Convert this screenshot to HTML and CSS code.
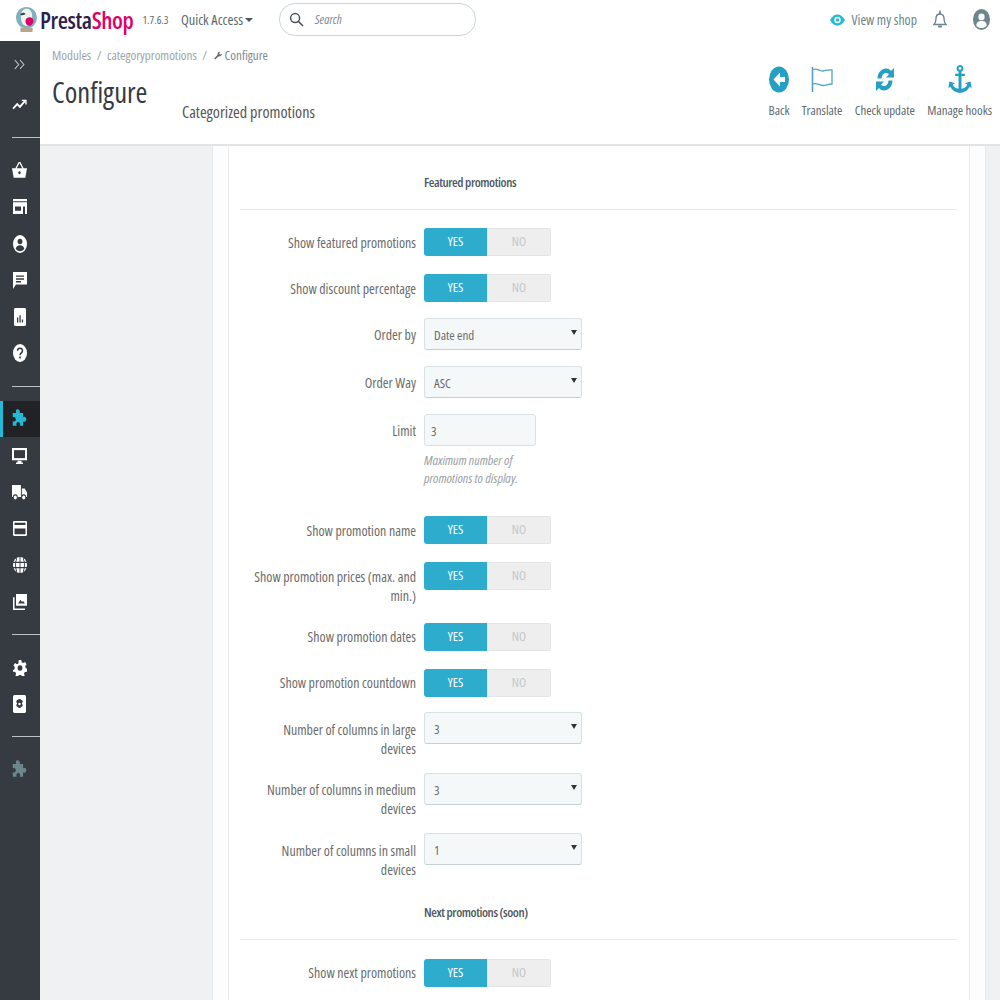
FILE: index.html
```html
<!DOCTYPE html>
<html lang="en">
<head>
<meta charset="utf-8">
<title>Configure</title>
<link rel="stylesheet" href="styles.css">
</head>
<body>
<svg class="defs" width="0" height="0" aria-hidden="true">
  <symbol id="puzzle" viewBox="1.5 .8 13.5 14" preserveAspectRatio="none"><path d="M5.600 1.200c1.300-.8 3 .1 3 1.500 0 .5-.2.8-.3 1.100h3.200v3.300c.4-.3.8-.5 1.200-.5 1.400 0 2.200 1.700 1.300 2.900-.6.8-1.700.9-2.500.3v3.400H8.400c.3-.4.5-.8.4-1.300-.1-1.500-2-2.100-3-1-.5.600-.5 1.500 0 2.300H2.200v-3.600c.5.400 1.200.6 1.800.3 1.300-.6 1.200-2.600-.2-3.100-.6-.2-1.200 0-1.600.3V3.800h3.200c-.5-.8-.7-2 .2-2.600z"/></symbol>
</svg>
<header class="topbar">
  <div class="brand">
    <svg class="logo" viewBox="0 0 24 30" width="21" height="27" preserveAspectRatio="none"><circle cx="12" cy="13" r="12" fill="#7fb0be"/><path d="M5.500 11c0-5 3-8 6.500-8s6.500 3 6.500 8c0 6-1.500 11-6.500 11-3.500 0-6.500-3-6.500-11z" fill="#f3f1ec"/><path d="M11 9C9 6.500 5.500 7.500 5 10c2 .5 4.500.3 6-1z" fill="#3a3f4a"/><path d="M12 14c3-2.500 7-1.500 8 2 0 4-3.500 7-7 5.500-2.500-2-3-5.500-1-7.500z" fill="#df0067"/><rect x="5" y="24" width="14" height="5" rx="1" fill="#b9a68f"/></svg>
    <span class="brand-name"><span class="brand-dark">Presta</span><span class="brand-pink">Shop</span></span>
    <span class="version">1.7.6.3</span>
  </div>
  <div class="quick">Quick Access<span class="caret"></span></div>
  <div class="search">
    <svg viewBox="0 0 16 16" width="15" height="15" fill="none" stroke="#4a5560" stroke-width="1.600"><circle cx="6.500" cy="6.500" r="4.800"/><path d="M10 10l5 5"/></svg>
    <span>Search</span>
  </div>
  <div class="top-right">
    <div class="view-shop">
      <svg viewBox="0 0 16 12" width="15" height="12"><path d="M0 6c2-4 5-6 8-6s6 2 8 6c-2 4-5 6-8 6S2 10 0 6z" fill="#25b9d7"/><circle cx="8" cy="6" r="3.400" fill="#fff"/><circle cx="8" cy="6" r="1.900" fill="#25b9d7"/></svg>
      <span>View my shop</span>
    </div>
    <svg class="bell" viewBox="0 0 14 18" width="14" height="19" fill="none" stroke="#6c868e" stroke-width="1.400"><path d="M1 14h12c-1.500-1.500-2-2.500-2-6 0-2.500-1.500-4.500-4-4.500S3 5.500 3 8c0 3.500-.5 4.500-2 6z"/><path d="M7 1v2.500M5.800 16h2.400" stroke-width="1.800" stroke-linecap="round"/></svg>
    <svg class="user" viewBox="0 0 18 20" width="17" height="21" preserveAspectRatio="none"><ellipse cx="9" cy="10" rx="9" ry="10" fill="#6c868e"/><circle cx="9" cy="7.500" r="3.300" fill="#fff"/><path d="M3.500 16c0-3.500 2.500-4.500 5.500-4.500s5.500 1 5.500 4.500c-1.500 1.500-3.500 2.200-5.500 2.200S5 17.500 3.500 16z" fill="#fff"/></svg>
  </div>
</header>

<div class="shell">
  <nav class="side">
    <div class="nav-item">
      <svg viewBox="0 0 14 12" width="12" height="11" fill="none" stroke="#bebebe" stroke-width="1.300"><path d="M1 1l4.500 5L1 11M7 1l4.500 5L7 11"/></svg>
    </div>
    <div class="nav-item nav-trend">
      <svg viewBox="0 0 16 12" width="15" height="11" fill="none" stroke="#fff" stroke-width="2"><path d="M1 10.500l4.500-5 3 3L14 2"/><path d="M10.500 1.500H15V6" stroke-width="1.500"/></svg>
    </div>
    <hr class="nav-sep">
    <div class="nav-group">
      <div class="nav-item"><svg viewBox="0 0 16 14" width="15" height="16" preserveAspectRatio="none" fill="#fff"><path d="M0 5.500h16l-1.800 8.200H1.800z"/><path d="M4 6l3.500-5.500h1L12 6" fill="none" stroke="#fff" stroke-width="1.300"/><circle cx="8" cy="9.500" r="1.300" fill="#363a41"/></svg></div>
      <div class="nav-item"><svg viewBox="0 0 14 14" width="14" height="15" preserveAspectRatio="none" fill="#fff"><path d="M0 0h14v2H0zM0 3h14v11H0z"/><path d="M2 7h6v4H2zM10 7h2v7h-2z" fill="#363a41"/></svg></div>
      <div class="nav-item"><svg viewBox="0 0 14 16" width="14" height="18" preserveAspectRatio="none"><ellipse cx="7" cy="8" rx="7" ry="8" fill="#fff"/><circle cx="7" cy="5.800" r="2.400" fill="#363a41"/><path d="M2.800 12.500c0-2.500 2-3.500 4.200-3.500s4.200 1 4.200 3.500C10 14 8.500 14.400 7 14.400S4 14 2.800 12.500z" fill="#363a41"/></svg></div>
      <div class="nav-item"><svg viewBox="0 0 14 15" width="14" height="17" preserveAspectRatio="none"><path d="M0 0h14v11H3l-3 4z" fill="#fff"/><path d="M3 3h8v1.300H3zM3 5.500h8v1.300H3zM3 8h5v1.300H3z" fill="#363a41"/></svg></div>
      <div class="nav-item"><svg viewBox="0 0 12 15" width="12" height="18" preserveAspectRatio="none"><rect width="12" height="15" rx="1.200" fill="#fff"/><path d="M3 8h1.300v4H3zM5.400 6h1.300v6H5.400zM7.800 9.500h1.300V12H7.800z" fill="#363a41"/></svg></div>
      <div class="nav-item"><svg viewBox="0 0 14 16" width="14" height="18" preserveAspectRatio="none"><ellipse cx="7" cy="8" rx="7" ry="8" fill="#fff"/><path d="M4.500 6c0-3 5-3 5 0 0 2-2.500 2-2.500 4" fill="none" stroke="#363a41" stroke-width="1.500"/><path d="M6.200 11.200h1.600v1.700H6.200z" fill="#363a41"/></svg></div>
    </div>
    <hr class="nav-sep">
    <div class="nav-group">
      <div class="nav-item active"><svg width="15" height="19" fill="#25b9d7"><use href="#puzzle"/></svg></div>
      <div class="nav-item"><svg viewBox="0 0 15 15" width="15" height="16" preserveAspectRatio="none"><path d="M0 0h15v11.500H0z" fill="#fff"/><path d="M2 2h11v7.500H2z" fill="#363a41"/><path d="M5.500 12h4v1.500h1.500V15H4v-1.500h1.500z" fill="#fff"/></svg></div>
      <div class="nav-item"><svg viewBox="0 0 16 13" width="15" height="15" preserveAspectRatio="none" fill="#fff"><path d="M0 0h9.500v10.500H0zM10.500 3h3L16 6.500v4h-5.500z"/><circle cx="3.500" cy="10.800" r="2.200" stroke="#363a41"/><circle cx="12.500" cy="10.800" r="2.200" stroke="#363a41"/></svg></div>
      <div class="nav-item"><svg viewBox="0 0 14 13" width="14" height="15" preserveAspectRatio="none"><rect width="14" height="13" rx="1" fill="#fff"/><path d="M1.500 1.500h11v2h-11zM1.500 6.500h11v5h-11z" fill="#363a41"/></svg></div>
      <div class="nav-item"><svg viewBox="0 0 14 14" width="14" height="16" preserveAspectRatio="none"><circle cx="7" cy="7" r="7" fill="#fff"/><path d="M0 4.700h14M0 9.300h14M7 0v14M3.800 1c-1.500 3.500-1.500 8.500 0 12M10.200 1c1.500 3.500 1.500 8.500 0 12" fill="none" stroke="#363a41" stroke-width=".9"/></svg></div>
      <div class="nav-item"><svg viewBox="0 0 14 15" width="14" height="16" preserveAspectRatio="none"><path d="M3 0h11v11H3z" fill="#fff"/><path d="M0 3h1.500v10.500H12V15H0z" fill="#fff"/><path d="M5 9l2.500-3.500 1.500 2 1-1 2 2.500z" fill="#363a41"/></svg></div>
    </div>
    <hr class="nav-sep">
    <div class="nav-group">
      <div class="nav-item"><svg viewBox="0 0 14 14" width="14" height="16" preserveAspectRatio="none"><path d="M5.700 0h2.600l.4 2 1.500.7 1.800-1 1.600 2-1.300 1.600.3 1.700 1.800.8-.5 2.500-2 .1-.9 1.400.7 1.900-2.300 1.100-1.300-1.600H6l-1.300 1.600-2.300-1.100.7-1.900-.9-1.400-2-.1L-.3 8.800l1.800-.8.300-1.700L.5 4.700l1.600-2 1.800 1 1.500-.7z" fill="#fff"/><circle cx="7" cy="7" r="2.400" fill="#363a41"/></svg></div>
      <div class="nav-item"><svg viewBox="0 0 13 16" width="13" height="18" preserveAspectRatio="none"><rect width="13" height="16" rx="1.500" fill="#fff"/><path d="M5.400 3.500h2.200l.2 1.200 1-.4 1.100 1.800-.9.900v1l.9.900-1.100 1.800-1-.4-.2 1.200H5.400l-.2-1.200-1 .4-1.100-1.800.9-.9v-1l-.9-.9 1.100-1.800 1 .4z" fill="#363a41"/><circle cx="6.500" cy="8" r="1.200" fill="#fff"/></svg></div>
    </div>
    <hr class="nav-sep">
    <div class="nav-item nav-last"><svg width="15" height="19" fill="#6c868e"><use href="#puzzle"/></svg></div>
  </nav>

  <main class="main">
    <section class="page-head">
      <div class="head-left">
        <div class="crumbs">
          <span>Modules</span><span>/</span><span>categorypromotions</span><span>/</span>
          <span class="crumb-last"><svg viewBox="0 0 10 10" width="8" height="9" fill="#6c6c6c"><path d="M0 9l4.500-5C4 2 5.500 0 8 .5L6.500 2 7 3.500l1.500.3L10 2.500C10 5 8 6.500 6 6L1.500 10z"/></svg>Configure</span>
        </div>
        <div class="title-row">
          <h1>Configure</h1>
          <h2>Categorized promotions</h2>
        </div>
      </div>
      <div class="toolbar">
        <div class="tool"><svg viewBox="0 0 20 29" width="20" height="29"><ellipse cx="10" cy="14.500" rx="10" ry="13" fill="#25a0c4"/><path d="M11 7.500l-6.500 7 6.500 7v-4.500h5v-5h-5z" fill="#fff"/></svg><span>Back</span></div>
        <div class="tool"><svg viewBox="0 0 22 29" width="22" height="29" fill="none" stroke="#4fa3c0" stroke-width="1.300"><path d="M1.500 2v25" stroke-width="1.600"/><path d="M2 4.500c4-2 6 2 10 1.500 3-.3 5-1.500 9-1v14c-4 0-6 1.500-9 1.500-4 0-6-3-10-1.500"/></svg><span>Translate</span></div>
        <div class="tool"><svg viewBox="0 0 20 29" width="20" height="29" fill="#25a0c4"><path d="M2.500 13.500C2.500 7.500 7 3 11.500 3.500c2 .2 3.500 1.200 4.500 2.500L19 3v9.500h-8l3-3.200c-2.500-2.500-7-1.500-7.500 4.200z"/><path d="M17.500 15.500c0 6-4.500 10.500-9 10-2-.2-3.500-1.200-4.500-2.500L1 26v-9.500h8l-3 3.200c2.500 2.500 7 1.500 7.500-4.200z"/></svg><span>Check update</span></div>
        <div class="tool"><svg viewBox="0 0 24 30" width="24" height="29" fill="#25a0c4"><path d="M12 0a3.500 3.500 0 0 1 1.500 6.700V9H17v2.500h-3.500v13c3-.3 5.500-2 6-4.500L17 19l6-2 1 7-2-1.500c-1.500 3.500-5 6-10 6.500-5-.5-8.500-3-10-6.500L0 24l1-7 6 2-2.500 1c.5 2.500 3 4.200 6 4.500v-13H7V9h3.500V6.700A3.500 3.500 0 0 1 12 0zm0 2a1.500 1.500 0 1 0 0 3 1.500 1.500 0 0 0 0-3z"/></svg><span>Manage hooks</span></div>
      </div>
    </section>

    <div class="content">
      <div class="panel">
        <form class="card">
          <h3 class="legend"><span>Featured promotions</span></h3>

          <div class="row"><label>Show featured promotions</label><div class="toggle"><span class="yes">YES</span><span class="no">NO</span></div></div>
          <div class="row"><label>Show discount percentage</label><div class="toggle"><span class="yes">YES</span><span class="no">NO</span></div></div>
          <div class="row row-select"><label>Order by</label><div class="select"><span>Date end</span><i></i></div></div>
          <div class="row row-select row-second"><label>Order Way</label><div class="select"><span>ASC</span><i></i></div></div>
          <div class="row row-help row-select row-second">
            <label>Limit</label>
            <div class="field"><div class="input">3</div><p class="help">Maximum number of promotions to display.</p></div>
          </div>
          <div class="row"><label>Show promotion name</label><div class="toggle"><span class="yes">YES</span><span class="no">NO</span></div></div>
          <div class="row"><label>Show promotion prices (max. and min.)</label><div class="toggle"><span class="yes">YES</span><span class="no">NO</span></div></div>
          <div class="row"><label>Show promotion dates</label><div class="toggle"><span class="yes">YES</span><span class="no">NO</span></div></div>
          <div class="row"><label>Show promotion countdown</label><div class="toggle"><span class="yes">YES</span><span class="no">NO</span></div></div>
          <div class="row row-select row-tall"><label>Number of columns in large devices</label><div class="select"><span>3</span><i></i></div></div>
          <div class="row row-select row-tall row-second"><label>Number of columns in medium devices</label><div class="select"><span>3</span><i></i></div></div>
          <div class="row row-select row-tall row-second"><label>Number of columns in small devices</label><div class="select"><span>1</span><i></i></div></div>

          <h3 class="legend legend-next"><span>Next promotions (soon)</span></h3>
          <div class="row"><label>Show next promotions</label><div class="toggle"><span class="yes">YES</span><span class="no">NO</span></div></div>
        </form>
      </div>
    </div>
  </main>
</div>
</body>
</html>
```

FILE: styles.css
```css
* { box-sizing: border-box; }
html, body { margin: 0; height: 1000px; overflow: hidden; }
body { font-family: "Open Sans", "Liberation Sans", sans-serif; font-stretch: 75%; font-size: 13px; color: #6c6c6c; background: #fff; }
.defs { position: absolute; }

.topbar { height: 41px; display: flex; align-items: center; background: #fff; padding: 0 0 2px 16px; }
.brand { display: flex; align-items: center; width: 165px; }
.logo { flex: none; margin-right: 3px; }
.brand-name { font-stretch: 87%; font-size: 23.500px; font-weight: 600; letter-spacing: -0.4px; white-space: nowrap; }
.brand-dark { color: #2d1f4e; }
.brand-pink { color: #df0067; }
.version { font-size: 11px; margin-left: 9px; color: #5c6a70; }
.quick { width: 98px; color: #5d6a70; font-size: 14.300px; display: flex; align-items: center; white-space: nowrap; }
.caret { width: 0; height: 0; border: 4px solid transparent; border-top-color: #4a5560; border-bottom: 0; margin-left: 2px; }
.search { width: 197px; height: 33px; border: 1px solid #c7d6da; border-radius: 16px; display: flex; align-items: center; padding-left: 9px; gap: 11px; font-style: italic; color: #7a8a90; font-size: 12.400px; }
.top-right { margin-left: auto; display: flex; align-items: center; }
.view-shop { display: flex; align-items: center; gap: 7px; font-size: 13.800px; color: #6c868e; }
.bell { margin-left: 16px; }
.user { margin-left: 26px; margin-right: 10px; }

.shell { display: flex; height: 959px; }
.side { width: 40px; flex: none; background: #363a41; padding-top: 5px; }
.nav-item { height: 36.600px; display: flex; align-items: center; justify-content: center; position: relative; padding-right: 1px; }
.nav-item.active { background: #202226; }
.nav-item.active::before { content: ""; position: absolute; left: 0; top: 0; bottom: 0; width: 3px; background: #25b9d7; }
.nav-trend { margin-top: 3.400px; }
.nav-last { margin-top: 14px; }
.nav-sep { margin: 14.500px 0 0 12px; border: 0; border-top: 1px solid #bcc1c4; height: 1px; }
.nav-group + .nav-sep { margin-top: 0; }
.nav-group { padding: 14px 0; }

.main { flex: 1; min-width: 0; display: flex; flex-direction: column; background: #eff1f2; }
.page-head { height: 105px; flex: none; background: #fff; border-bottom: 2px solid #e2e5e6; display: flex; justify-content: space-between; padding-left: 12px; }
.crumbs { display: flex; gap: 5.500px; padding-top: 7px; font-size: 13px; line-height: 15px; color: #9aa5aa; }
.crumb-last { display: flex; align-items: center; gap: 3px; margin-left: 1px; color: #7d8a90; }
.title-row { display: flex; }
h1 { margin: 10px 0 0; font-size: 28.600px; line-height: 38px; font-weight: 400; color: #363a41; width: 130px; }
h2 { margin: 39px 0 0; font-size: 16.200px; line-height: 20px; font-weight: 400; color: #555; white-space: nowrap; }

.toolbar { display: flex; align-items: flex-start; gap: 12.300px; padding-top: 24px; padding-right: 8px; }
.tool { display: flex; flex-direction: column; align-items: center; gap: 8px; font-size: 12.900px; line-height: 16px; color: #5d6a70; white-space: nowrap; }

.content { flex: 1; padding: 0 14px 0 172px; overflow: hidden; }
.panel { height: 100%; background: #fdfdfd; border-left: 1px solid #e6e8ea; border-right: 1px solid #e6e8ea; padding: 0 15px; }
.card { height: 100%; background: #fff; border-left: 1px solid #e8eaeb; border-right: 1px solid #e8eaeb; padding: 0 12px 0 11px; }
.legend { margin: 0 0 18px; height: 64px; padding: 26px 0 0 184px; border-bottom: 1px solid #e8eaeb; font-size: 13px; letter-spacing: -0.42px; line-height: 20px; font-weight: 600; color: #50585e; }
.legend-next { height: 46.500px; padding-top: 8.500px; margin-bottom: 18.500px; }

.row { display: flex; align-items: flex-start; margin-bottom: 18px; }
.row label { width: 164px; margin-left: 12px; text-align: right; font-size: 13.900px; line-height: 19px; color: #6c6c6c; padding-top: 4.500px; flex: none; }
.row-select { margin-top: -2.500px; margin-bottom: 16px; }
.row-second { margin-top: 0; }
.row-select label { padding-top: 7.500px; }
.row-tall { margin-bottom: 15px; }
.row-help { margin-bottom: 29px; }
.toggle { margin-left: 8px; width: 127px; height: 28px; display: flex; border-radius: 3px; overflow: hidden; font-size: 13px; line-height: 27px; text-align: center; }
.yes { width: 63px; background: #2eacce; color: #fff; }
.no { flex: 1; background: #eee; color: #c4c8ca; box-shadow: inset 0 0 0 1px #e2e4e5; }
.select { margin-left: 8px; width: 158px; height: 32px; background: #f5f8f9; border: 1px solid #d7e2e6; border-bottom-color: #c3d0d4; border-radius: 3px; padding-left: 9px; line-height: 32px; font-size: 13px; color: #6c6c6c; position: relative; }
.select i { position: absolute; right: 4px; top: 11px; width: 0; height: 0; border: 3px solid transparent; border-top: 5px solid #333; border-bottom: 0; }
.field { margin-left: 8px; width: 112px; }
.input { height: 32px; background: #f5f8f9; border: 1px solid #d7e2e6; border-radius: 3px; padding-left: 6px; line-height: 32px; font-size: 13px; }
.help { margin: 5.500px 0 0; font-size: 13.300px; line-height: 18px; font-style: italic; color: #9aa0a3; }
```
